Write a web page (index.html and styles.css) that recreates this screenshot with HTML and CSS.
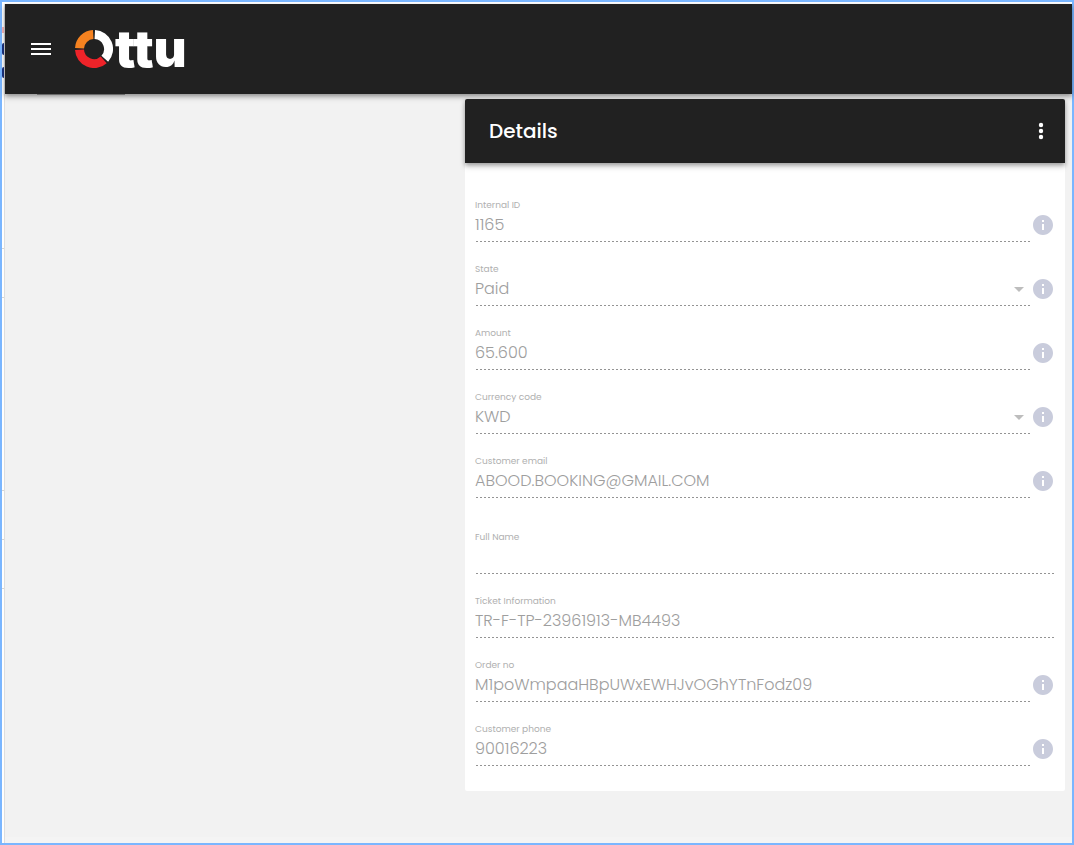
FILE: index.html
```html
<!DOCTYPE html>
<html lang="en">
<head>
    <meta charset="UTF-8">
    <meta name="viewport" content="width=device-width, initial-scale=1.0">
    <title>Ottu - Details</title>
    <link rel="stylesheet" href="styles.css">
</head>
<body>
    <svg width="0" height="0" class="sprite" aria-hidden="true">
        <symbol id="icon-info" viewBox="0 0 24 24">
            <path d="M12 2C6.480 2 2 6.480 2 12s4.480 10 10 10 10-4.480 10-10S17.520 2 12 2zm1 15h-2v-6h2v6zm0-8h-2V7h2v2z"/>
        </symbol>
        <symbol id="icon-arrow" viewBox="0 0 10 5">
            <path d="M0 0h10L5 5z"/>
        </symbol>
    </svg>

    <div class="window">
        <!-- Edge of the page behind the panel -->
        <div class="edge">
            <span class="mark mark-red"></span>
            <span class="mark mark-blue"></span>
            <span class="mark mark-blue-low"></span>
            <span class="rule rule-1"></span>
            <span class="rule rule-2"></span>
            <span class="rule rule-3"></span>
            <span class="rule rule-4"></span>
            <span class="rule rule-5"></span>
        </div>

        <div class="app">
            <header class="topbar">
                <button type="button" class="icon-button" aria-label="Menu">
                    <svg width="20" height="12" viewBox="0 0 20 12"><path fill="#fff" d="M0 0h20v2H0zM0 5h20v2H0zM0 10h20v2H0z"/></svg>
                </button>
                <a href="#" class="logo" aria-label="Ottu">
                    <svg width="38" height="38" viewBox="0 0 38 38" fill="none" stroke-width="9">
                        <path stroke="#f58220" d="M4.500 18.200A14.500 14.500 0 0 1 18.200 4.500"/>
                        <path stroke="#fff" d="M19.800 4.500A14.500 14.500 0 0 1 29.800 28.700"/>
                        <path stroke="#ee2329" d="M4.500 19.800A14.500 14.500 0 0 0 28.700 29.800"/>
                    </svg>
                    <span class="logo-text">ttu</span>
                </a>
            </header>

            <main>
                <section class="card">
                    <div class="card-header">
                        <h1>Details</h1>
                        <button type="button" class="icon-button" aria-label="More">
                            <svg width="6" height="18" viewBox="0 0 6 18" fill="#fff"><circle cx="3" cy="3" r="2.200"/><circle cx="3" cy="9" r="2.200"/><circle cx="3" cy="15" r="2.200"/></svg>
                        </button>
                    </div>
                    <form class="card-body">
                        <div class="field">
                            <div class="control">
                                <label for="internal_id">Internal ID</label>
                                <input type="text" id="internal_id" value="1165" disabled>
                            </div>
                            <button type="button" class="info" aria-label="Info"><svg><use href="#icon-info"/></svg></button>
                        </div>
                        <div class="field">
                            <div class="control">
                                <label for="state">State</label>
                                <select id="state" disabled><option>Paid</option></select>
                                <svg class="arrow"><use href="#icon-arrow"/></svg>
                            </div>
                            <button type="button" class="info" aria-label="Info"><svg><use href="#icon-info"/></svg></button>
                        </div>
                        <div class="field">
                            <div class="control">
                                <label for="amount">Amount</label>
                                <input type="text" id="amount" value="65.600" disabled>
                            </div>
                            <button type="button" class="info" aria-label="Info"><svg><use href="#icon-info"/></svg></button>
                        </div>
                        <div class="field">
                            <div class="control">
                                <label for="currency">Currency code</label>
                                <select id="currency" disabled><option>KWD</option></select>
                                <svg class="arrow"><use href="#icon-arrow"/></svg>
                            </div>
                            <button type="button" class="info" aria-label="Info"><svg><use href="#icon-info"/></svg></button>
                        </div>
                        <div class="field">
                            <div class="control">
                                <label for="email">Customer email</label>
                                <input type="text" id="email" value="ABOOD.BOOKING@GMAIL.COM" disabled>
                            </div>
                            <button type="button" class="info" aria-label="Info"><svg><use href="#icon-info"/></svg></button>
                        </div>
                        <div class="field group-start">
                            <div class="control">
                                <label for="full_name">Full Name</label>
                                <input type="text" id="full_name" disabled>
                            </div>
                        </div>
                        <div class="field">
                            <div class="control">
                                <label for="ticket">Ticket Information</label>
                                <input type="text" id="ticket" value="TR-F-TP-23961913-MB4493" disabled>
                            </div>
                        </div>
                        <div class="field">
                            <div class="control">
                                <label for="order_no">Order no</label>
                                <input type="text" id="order_no" value="M1poWmpaaHBpUWxEWHJvOGhYTnFodz09" disabled>
                            </div>
                            <button type="button" class="info" aria-label="Info"><svg><use href="#icon-info"/></svg></button>
                        </div>
                        <div class="field">
                            <div class="control">
                                <label for="phone">Customer phone</label>
                                <input type="text" id="phone" value="90016223" disabled>
                            </div>
                            <button type="button" class="info" aria-label="Info"><svg><use href="#icon-info"/></svg></button>
                        </div>
                    </form>
                </section>
            </main>
        </div>
    </div>
</body>
</html>
```
FILE: styles.css
```css
* {
    box-sizing: border-box;
}

body {
    margin: 0;
    font-family: Poppins, Inter, sans-serif;
    background-color: #f2f2f2;
}

button {
    padding: 0;
    border: none;
    background: none;
    cursor: pointer;
}

.sprite {
    position: absolute;
}

.window {
    display: flex;
    min-height: 100vh;
    padding-top: 2px;
    border: 2px solid #7ab6ff;
    background-color: #fff;
}

/* Strip at the left */
.edge {
    position: relative;
    flex: none;
    width: 3px;
    overflow: hidden;
    border-right: 1px solid #dedede;
}

.mark,
.rule {
    position: absolute;
    left: 0;
    width: 100%;
}

.mark-red {
    top: 23px;
    height: 6px;
    background-color: #f7b5b8;
}

.mark-blue {
    top: 39px;
    height: 12px;
    border-radius: 2px 0 0 2px;
    background-color: #1b3380;
}

.mark-blue-low {
    top: 63px;
    height: 11px;
    border-radius: 2px 0 0 2px;
    background-color: #1b3380;
}

.rule {
    height: 1px;
    background-color: #d5d5d5;
}

.rule-1 { top: 244px; }
.rule-2 { top: 293px; }
.rule-3 { top: 486px; }
.rule-4 { top: 535px; }
.rule-5 { top: 584px; }

.app {
    flex: 1;
    min-width: 0;
    border-bottom: 6px solid #f4f4f4;
    background-color: #f2f2f2;
}

/* Top bar */
.topbar {
    position: relative;
    display: flex;
    align-items: center;
    height: 90px;
    padding: 0 24px;
    gap: 22px;
    background-color: #212121;
    box-shadow: 0 2px 4px rgba(0, 0, 0, 0.3), 0 4px 6px rgba(0, 0, 0, 0.14);
}

.topbar::after {
    content: "";
    position: absolute;
    top: 100%;
    left: 32px;
    width: 88px;
    height: 1px;
    background-color: #6b6b6b;
}

.icon-button {
    display: flex;
    align-items: center;
    justify-content: center;
    width: 24px;
    height: 24px;
}

.logo {
    display: flex;
    align-items: center;
    gap: 2px;
    color: #fff;
    text-decoration: none;
}

.logo-text {
    font-family: Inter, sans-serif;
    font-size: 51px;
    font-weight: 900;
    line-height: 56px;
}

/* Details card */
main {
    display: flex;
    justify-content: flex-end;
    padding: 5px 7px 46px;
}

.card {
    width: 600px;
    max-width: 100%;
    border-radius: 2px;
    background-color: #fff;
}

.card-header {
    position: relative;
    display: flex;
    align-items: center;
    justify-content: space-between;
    height: 64px;
    padding: 0 12px 0 24px;
    border-radius: 2px 2px 0 0;
    background-color: #212121;
    box-shadow: 0 2px 4px rgba(0, 0, 0, 0.3), 0 4px 6px rgba(0, 0, 0, 0.14);
}

.card-header h1 {
    margin: 0;
    color: #fff;
    font-size: 20px;
    font-weight: 500;
}

.card-body {
    padding: 15px 10px 25px;
}

.field {
    display: flex;
    height: 64px;
}

.group-start {
    margin-top: 12px;
}

.control {
    position: relative;
    flex: 1;
    min-width: 0;
    padding-top: 20px;
}

.control label {
    display: block;
    color: #b0b0b0;
    font-size: 9px;
    line-height: 14px;
}

.control input,
.control select {
    display: block;
    width: 100%;
    height: 30px;
    padding: 0 0 6px;
    border: none;
    border-radius: 0;
    outline: none;
    appearance: none;
    color: #9e9e9e;
    opacity: 1;
    font-family: inherit;
    font-size: 16px;
    font-weight: 300;
    background: repeating-linear-gradient(to right, transparent 0 1px, #949494 1px 3px, transparent 3px 4px) bottom / 100% 1px no-repeat;
}

.arrow {
    position: absolute;
    right: 7px;
    bottom: 14px;
    width: 10px;
    height: 5px;
    fill: #bdbdbd;
}

.info {
    flex: none;
    align-self: flex-end;
    width: 24px;
    height: 24px;
    margin-bottom: 5px;
}

.info svg {
    display: block;
    width: 24px;
    height: 24px;
    fill: #c9ccdc;
}
```
